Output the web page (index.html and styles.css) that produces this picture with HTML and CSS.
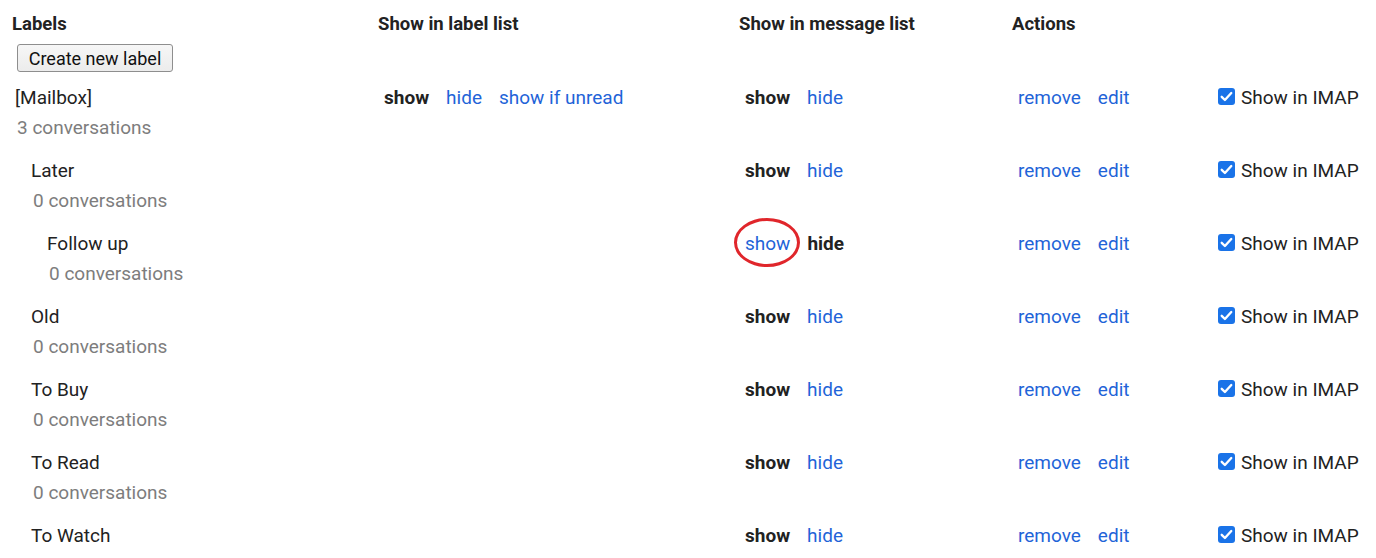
FILE: index.html
```html
<!DOCTYPE html>
<html>
<head>
<meta charset="utf-8">
<link rel="stylesheet" href="styles.css">
</head>
<body>
<div class="labels">
  <div class="grid head">
    <div class="h">Labels</div>
    <div class="h">Show in label list</div>
    <div class="h">Show in message list</div>
    <div class="h">Actions</div>
    <div></div>
  </div>
  <div class="btn-row"><button class="btn">Create new label</button></div>

  <div class="grid row">
    <div class="name lvl0"><div class="n">[Mailbox]</div><div class="c">3 conversations</div></div>
    <div class="cell"><b>show</b><a>hide</a><a>show if unread</a></div>
    <div class="cell"><b>show</b><a>hide</a></div>
    <div class="cell"><a>remove</a><a>edit</a></div>
    <div class="imap"><span class="cb"><svg viewBox="0 0 16 16"><path d="M3.5 8.3l3 3 6-6.6" /></svg></span>Show in IMAP</div>
  </div>

  <div class="grid row">
    <div class="name lvl1"><div class="n">Later</div><div class="c">0 conversations</div></div>
    <div class="cell"></div>
    <div class="cell"><b>show</b><a>hide</a></div>
    <div class="cell"><a>remove</a><a>edit</a></div>
    <div class="imap"><span class="cb"><svg viewBox="0 0 16 16"><path d="M3.5 8.3l3 3 6-6.6" /></svg></span>Show in IMAP</div>
  </div>

  <div class="grid row">
    <div class="name lvl2"><div class="n">Follow up</div><div class="c">0 conversations</div></div>
    <div class="cell"></div>
    <div class="cell"><a class="circled">show</a><b>hide</b></div>
    <div class="cell"><a>remove</a><a>edit</a></div>
    <div class="imap"><span class="cb"><svg viewBox="0 0 16 16"><path d="M3.5 8.3l3 3 6-6.6" /></svg></span>Show in IMAP</div>
  </div>

  <div class="grid row">
    <div class="name lvl1"><div class="n">Old</div><div class="c">0 conversations</div></div>
    <div class="cell"></div>
    <div class="cell"><b>show</b><a>hide</a></div>
    <div class="cell"><a>remove</a><a>edit</a></div>
    <div class="imap"><span class="cb"><svg viewBox="0 0 16 16"><path d="M3.5 8.3l3 3 6-6.6" /></svg></span>Show in IMAP</div>
  </div>

  <div class="grid row">
    <div class="name lvl1"><div class="n">To Buy</div><div class="c">0 conversations</div></div>
    <div class="cell"></div>
    <div class="cell"><b>show</b><a>hide</a></div>
    <div class="cell"><a>remove</a><a>edit</a></div>
    <div class="imap"><span class="cb"><svg viewBox="0 0 16 16"><path d="M3.5 8.3l3 3 6-6.6" /></svg></span>Show in IMAP</div>
  </div>

  <div class="grid row">
    <div class="name lvl1"><div class="n">To Read</div><div class="c">0 conversations</div></div>
    <div class="cell"></div>
    <div class="cell"><b>show</b><a>hide</a></div>
    <div class="cell"><a>remove</a><a>edit</a></div>
    <div class="imap"><span class="cb"><svg viewBox="0 0 16 16"><path d="M3.5 8.3l3 3 6-6.6" /></svg></span>Show in IMAP</div>
  </div>

  <div class="grid row">
    <div class="name lvl1"><div class="n">To Watch</div><div class="c">0 conversations</div></div>
    <div class="cell"></div>
    <div class="cell"><b>show</b><a>hide</a></div>
    <div class="cell"><a>remove</a><a>edit</a></div>
    <div class="imap"><span class="cb"><svg viewBox="0 0 16 16"><path d="M3.5 8.3l3 3 6-6.6" /></svg></span>Show in IMAP</div>
  </div>
</div>
</body>
</html>
```

FILE: styles.css
```css
html, body {
  margin: 0;
  padding: 0;
  background: #fff;
  overflow: hidden;
}
body {
  font-family: Roboto, "Liberation Sans", Arial, sans-serif;
  font-size: 19px;
  color: #222;
}
.labels {
  padding-left: 12px;
}
.grid {
  display: grid;
  grid-template-columns: 366px 361px 273px 206px 1fr;
}
.head {
  padding-top: 10px;
  line-height: 28px;
}
.h {
  font-weight: bold;
  font-size: 18.5px;
  color: #222;
}
.btn-row {
  padding: 6px 0 0 5px;
  height: 39px;
}
.btn {
  font-family: Roboto, "Liberation Sans", Arial, sans-serif;
  font-size: 18px;
  color: #111;
  height: 28px;
  width: 156px;
  padding: 0;
  background: linear-gradient(#f6f6f6, #ececec);
  border: 1px solid #8e8e8e;
  border-radius: 3px;
}
.row {
  height: 73px;
  line-height: 30px;
}
.name .n {
  color: #222;
}
.name .c {
  color: #7d7d7d;
}
.lvl0 { padding-left: 3px; }
.lvl0 .c { padding-left: 2px; }
.lvl1 { padding-left: 19px; }
.lvl1 .c { padding-left: 2px; }
.lvl2 { padding-left: 35px; }
.lvl2 .c { padding-left: 2px; }
.cell {
  padding-left: 6px;
  display: flex;
  align-items: flex-start;
  gap: 17px;
}
.cell b {
  font-weight: bold;
  color: #222;
}
.cell a {
  color: #1f64d8;
  cursor: pointer;
}
.circled {
  position: relative;
}
.circled::after {
  content: "";
  position: absolute;
  left: -11px;
  top: -11px;
  width: 60px;
  height: 43px;
  border: 3px solid #e0262b;
  border-radius: 50%;
}
.imap {
  display: flex;
  align-items: flex-start;
  color: #222;
}
.cb {
  display: inline-block;
  width: 17px;
  height: 17px;
  margin-top: 5px;
  margin-right: 6px;
  background: #1a73e8;
  border-radius: 3px;
}
.cb svg {
  display: block;
  width: 17px;
  height: 17px;
  fill: none;
  stroke: #fff;
  stroke-width: 2.2;
  stroke-linecap: round;
  stroke-linejoin: round;
}
```
